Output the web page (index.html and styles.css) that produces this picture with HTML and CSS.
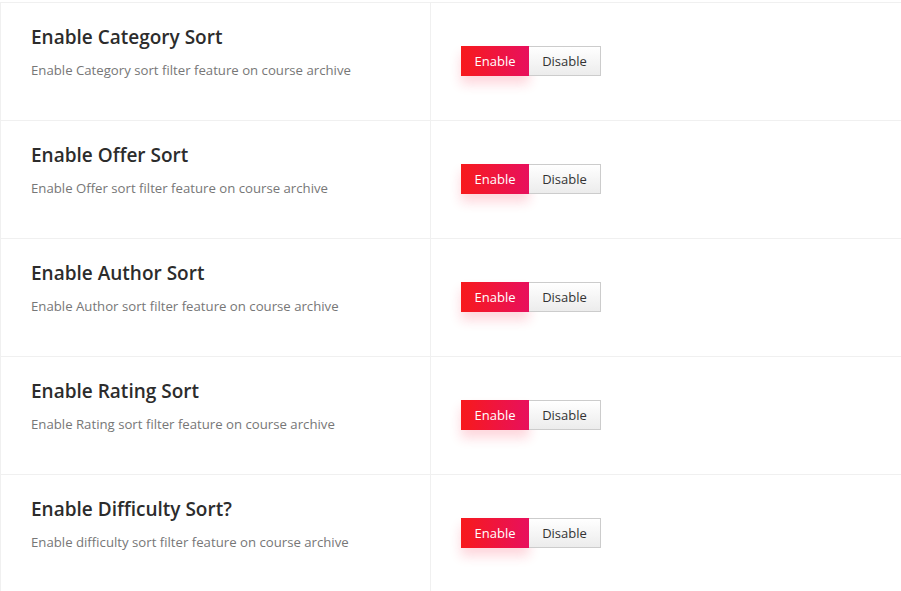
FILE: index.html
```html
<!DOCTYPE html>
<html lang="en">
<head>
<meta charset="UTF-8">
<meta name="viewport" content="width=device-width, initial-scale=1.0">
<title>Course Filter Settings</title>
<link rel="stylesheet" href="styles.css">
</head>
<body>
<div class="settings">
  <div class="row">
    <div class="label">
      <h3>Enable Category Sort</h3>
      <p>Enable Category sort filter feature on course archive</p>
    </div>
    <div class="field">
      <div class="switch"><span class="on">Enable</span><span class="off">Disable</span></div>
    </div>
  </div>
  <div class="row">
    <div class="label">
      <h3>Enable Offer Sort</h3>
      <p>Enable Offer sort filter feature on course archive</p>
    </div>
    <div class="field">
      <div class="switch"><span class="on">Enable</span><span class="off">Disable</span></div>
    </div>
  </div>
  <div class="row">
    <div class="label">
      <h3>Enable Author Sort</h3>
      <p>Enable Author sort filter feature on course archive</p>
    </div>
    <div class="field">
      <div class="switch"><span class="on">Enable</span><span class="off">Disable</span></div>
    </div>
  </div>
  <div class="row">
    <div class="label">
      <h3>Enable Rating Sort</h3>
      <p>Enable Rating sort filter feature on course archive</p>
    </div>
    <div class="field">
      <div class="switch"><span class="on">Enable</span><span class="off">Disable</span></div>
    </div>
  </div>
  <div class="row">
    <div class="label">
      <h3>Enable Difficulty Sort?</h3>
      <p>Enable difficulty sort filter feature on course archive</p>
    </div>
    <div class="field">
      <div class="switch"><span class="on">Enable</span><span class="off">Disable</span></div>
    </div>
  </div>
</div>
</body>
</html>
```

FILE: styles.css
```css
body {
  margin: 0;
  background: #fff;
  font-family: "Open Sans", "Noto Sans", sans-serif;
}

.settings {
  margin-top: 2px;
  border-left: 1px solid #f0f0f0;
}

.row {
  display: flex;
  height: 117px;
  border-top: 1px solid #f0f0f0;
}

.label {
  width: 399px;
  padding: 22px 0 0 30px;
  border-right: 1px solid #f0f0f0;
}

.label h3 {
  margin: 0;
  font-size: 19px;
  font-weight: 600;
  color: #2c2c2c;
  line-height: 25px;
}

.label p {
  margin: 11px 0 0;
  font-size: 13.2px;
  color: #777;
  line-height: 18px;
}

.field {
  padding: 43px 0 0 30px;
}

.switch {
  display: flex;
  font-size: 13px;
  line-height: 30px;
}

.switch span {
  display: block;
  height: 30px;
  text-align: center;
  box-sizing: border-box;
}

.on {
  width: 68px;
  color: #fff;
  background: linear-gradient(to right, #f71a1c, #e8105d);
  box-shadow: 0 8px 12px rgba(247, 30, 60, 0.18);
}

.off {
  width: 72px;
  color: #333;
  border: 1px solid #ccc;
  border-left: 0;
  line-height: 28px;
  background: linear-gradient(to bottom, #fff, #ececec);
}
```
